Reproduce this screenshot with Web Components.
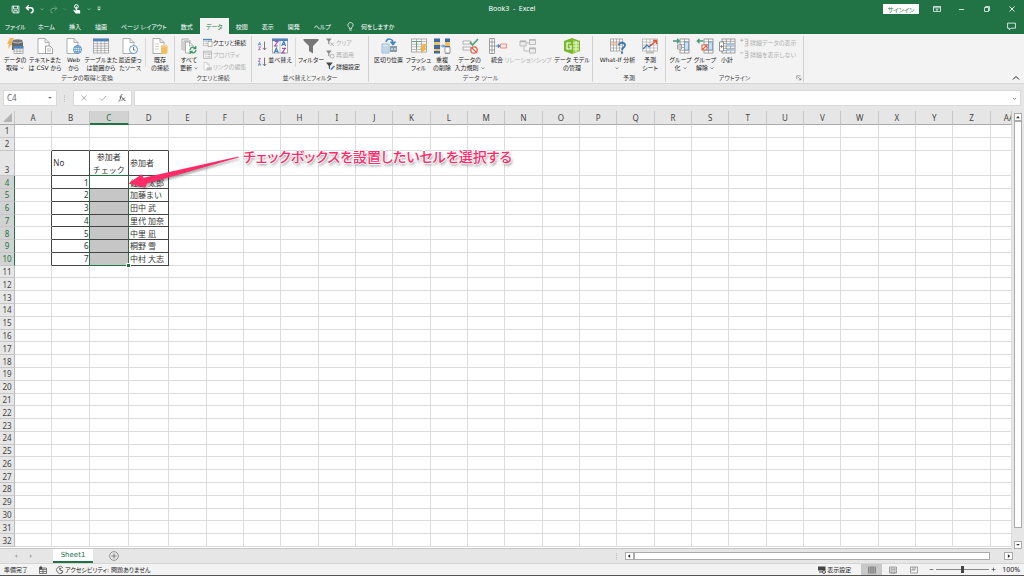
<!DOCTYPE html>
<html lang="ja">
<head>
<meta charset="utf-8">
<meta name="viewport" content="width=device-width, initial-scale=1">
<title>Book3 - Excel</title>
<style>
html,body{margin:0;height:100%}
body{font-family:"DejaVu Sans","Noto Sans CJK JP",sans-serif;font-size:6px;color:#333;font-feature-settings:"palt";overflow:hidden}
</style>
</head>
<body>
<excel-app></excel-app>
<script>
const table=(x,y,w,h,c,r,head='#4a86c5',line='#999')=>{
  let s=`<rect x="${x}" y="${y}" width="${w}" height="${h}" fill="#fff" stroke="${line}" stroke-width=".8"/>`;
  for(let i=1;i<c;i++)s+=`<path d="M${x+w*i/c} ${y}v${h}" stroke="${line}" stroke-width=".7"/>`;
  for(let i=1;i<r;i++)s+=`<path d="M${x} ${y+h*i/r}h${w}" stroke="${line}" stroke-width=".7"/>`;
  if(head)s+=`<path d="M${x-.4} ${y-.4}h${w+.8}v2.4h-${w+.8}z" fill="${head}"/>`;
  return s;
};
const page=(x=1,y=.5,w=11,h=15)=>`<path d="M${x} ${y}h${w-4}l4 4v${h-4}h-${w}z" fill="#fff" stroke="#999" stroke-width=".8"/><path d="M${x+w-4} ${y}v4h4" fill="none" stroke="#999" stroke-width=".8"/>`;
const sort=(x,a,b,ca,cb)=>{
  const g={A:'M0 5L2 0l2 5M.8 3.4h2.4',Z:'M.3.3h3.4L.3 5h3.4'};
  return `<g fill="none" stroke-width="1.2"><path transform="translate(${x} 2)" d="${g[a]}" stroke="${ca}"/><path transform="translate(${x} 9)" d="${g[b]}" stroke="${cb}"/></g>`;
};
const sortArrow='<path d="M12 1v13M9 11l3 3 3-3" fill="none" stroke="#666" stroke-width="1.4"/>';
const funnel='<path d="M0 1h10L6 6v6L4 10V6z" fill="#888"/>';
const ICONS={
  save:'<path d="M2 2h12v12H4l-2-2z" fill="none" stroke="#fff" stroke-width="1.5"/><path d="M4.5 2v5h7V2M5 14v-4h6v4" fill="none" stroke="#fff" stroke-width="1.5"/>',
  undo:'<path d="M6 2L2 6l4 4M2 6h7a4 4 0 0 1 0 8" fill="none" stroke="currentColor" stroke-width="2.2"/>',
  redo:'<path d="M10 2l4 4-4 4M14 6H7a4 4 0 0 0 0 8" fill="none" stroke="currentColor" stroke-width="1.6"/>',
  touch:'<circle cx="7" cy="4" r="3" fill="none" stroke="#fff" stroke-width="1.6"/><path d="M6 4h2v5l5 1v5H6L2 10l1-1 3 2z" fill="#fff"/>',
  caret:'<path d="M3 5l5 5 5-5z" fill="currentColor"/>',
  chev:'<path d="M3 6l5 5 5-5" fill="none" stroke="currentColor" stroke-width="2.4"/>',
  chevup:'<path d="M2 11l6-6 6 6" fill="none" stroke="currentColor" stroke-width="2"/>',
  custom:'<path d="M4 3h8" stroke="currentColor" stroke-width="2"/><path d="M3 7l5 5 5-5z" fill="currentColor"/>',
  left:'<path d="M11 3L5 8l6 5z" fill="currentColor"/>',
  right:'<path d="M5 3l6 5-6 5z" fill="currentColor"/>',
  up:'<path d="M3 11l5-6 5 6z" fill="currentColor"/>',
  ribbonopt:'<path d="M1 3h14v10H1zM1 5.5h14M8 12V8M6 9.500l2-2 2 2" fill="none" stroke="currentColor" stroke-width="1.5"/>',
  min:'<path d="M2 8h12" stroke="currentColor" stroke-width="1.8"/>',
  restore:'<path d="M3 5h8v8H3zM5 5V3h8v8h-2" fill="none" stroke="currentColor" stroke-width="1.5"/>',
  close:'<path d="M3 3l10 10M13 3L3 13" stroke="currentColor" stroke-width="1.8"/>',
  comment:'<path d="M1 2h14v9H7l-3 3v-3H1z" fill="none" stroke="currentColor" stroke-width="1.4"/>',
  bulb:'<path d="M6 12v-2C1 6 4 1 8 1s7 5 2 9v2zM6 14.500h4" fill="none" stroke="currentColor" stroke-width="1.4"/>',
  getdata:'<path d="M3 0h4L5 4h2L1 11l1-5H0z" fill="#f0b555"/><path d="M5 3v9h11V3z" fill="#666"/><ellipse cx="10.500" cy="3" rx="5.500" ry="2" fill="#777" stroke="#f3f3f3" stroke-width=".6"/>'+table(7,8.500,9,7,3,3),
  text:page()+'<path d="M8.500 8h4.500l2.500 2.500V15.500h-7z" fill="#fff" stroke="#888" stroke-width=".8"/><path d="M10 11h4M10 13h4" stroke="#999" stroke-width=".7"/>',
  web:page()+'<circle cx="11.500" cy="11.500" r="4" fill="#fff" stroke="#4a8bc9"/><path d="M7.500 11.500h8M11.500 7.500v8M8.500 9.500h6M8.500 13.500h6" stroke="#4a8bc9" stroke-width=".6"/><ellipse cx="11.500" cy="11.500" rx="2" ry="4" fill="none" stroke="#4a8bc9" stroke-width=".7"/>',
  range:table(.5,1,15,14,4,6),
  recent:page()+'<circle cx="11.500" cy="11.500" r="4" fill="#fff" stroke="#4a8bc9" stroke-width=".9"/><path d="M11.500 9v3h2" fill="none" stroke="#555" stroke-width=".8"/>',
  existing:page()+'<path d="M3 6h4M3 8.500h4M3 11h4" stroke="#bbb" stroke-width=".7"/><path d="M9 8v6.500c0 2 6.500 2 6.500 0V8z" fill="#f2c063"/><ellipse cx="12.200" cy="8" rx="3.300" ry="1.300" fill="#f6d08a"/>',
  refresh:'<path d="M1 12V1h7M3 13V3h7" fill="none" stroke="#999" stroke-width=".8"/>'+page(4.500,4,8,11)+'<circle cx="12" cy="12" r="4" fill="#f3f3f3"/><path d="M9 12a3 3 0 0 1 5-2M15 12a3 3 0 0 1-5 2M14.800 8v2.500h-2.500M9.200 16v-2.500h2.500" fill="none" stroke="#3b9b6c" stroke-width="1.300"/>',
  queries:table(.5,2,15,12,3,3)+'<path d="M9 6h7v9H9z" fill="#fff" stroke="#777"/>',
  props:'<path d="M1 2h14v13H1zM1 5h14" fill="#f3f3f3" stroke="#aaa" stroke-width="1.300"/><path d="M4 8h2M8 8h5M4 12h2M8 12h5" stroke="#aaa" stroke-width="1.400"/>',
  links:page(2,1,9,13).replaceAll('#999','#aaa')+'<path d="M7 12h3M11 12h4M7 10h3v4H7zM12 10h3v4h-3z" stroke="#aaa" fill="none"/>',
  az:'<g transform="translate(2 0)">'+sort(0,'A','Z','#4580be','#a04caf')+'</g>'+sortArrow,
  za:'<g transform="translate(2 0)">'+sort(0,'Z','A','#a04caf','#4580be')+'</g>'+sortArrow,
  sort:table(.5,1,15,14,2,1)+'<g transform="translate(0 1)">'+sort(2.300,'Z','A','#a04caf','#4580be')+sort(9.700,'A','Z','#4580be','#a04caf')+'</g>',
  filter:'<path d="M.5 1h15v1.500L10 8v7.500L6 13V8L.5 2.500z" fill="#777"/>',
  clear:funnel+'<path d="M8 8l6 6M14 8l-6 6" stroke="#aaa" stroke-width="1.600"/>',
  reapply:funnel+'<circle cx="11" cy="11" r="3.500" fill="#f3f3f3" stroke="#aaa" stroke-width="1.500"/>',
  advanced:'<path d="M0 1h12L7 7v6L5 11V7z" fill="#444"/><path d="M8 15l1-4 5-5 2 2-5 5z" fill="#3d80bd"/>',
  split:'<path d="M1 6h7v9H1z" fill="#e6f0f9" stroke="#7aa3ca" stroke-width=".8"/><path d="M2 9h5M2 11h5M2 13h5" stroke="#7aa3ca" stroke-width=".7"/><path d="M9 8h7v6H9z" fill="#8a9aaa"/><path d="M10 11h2M13 11h2" stroke="#fff"/><path d="M5 4c1-4 7-4 7 1M9.500 3.500l2.500 3 2.500-3" fill="none" stroke="#3c83c5" stroke-width="1.500"/>',
  flash:table(.5,1,15,13,3,5,null)+'<path d="M1 3.500h9M5.500 3v8" stroke="#5ba584"/><path d="M12 6h4l-2 4h2l-6 6 1-5H9z" fill="#f2b650"/>',
  dup:'<g><path d="M0 .5h6v15H0zM11 .5h5v15h-5z" fill="#3f6b9b"/><path d="M0 4h6v3H0zM0 11h6v2H0zM11 4h5v4h-5z" fill="#f0bf69"/><path d="M11 9h5v6h-5z" fill="#fff" stroke="#777" stroke-width=".7"/><path d="M6.500 8h4M9 6.500L10.500 8 9 9.500" fill="none" stroke="#3c83c5"/></g>',
  valid:'<path d="M1 3h8v3H1zM1 9h8v3H1z" fill="#fff" stroke="#999" stroke-width=".8"/><path d="M8 4l2.500 3L16 1" fill="none" stroke="#4aa27c" stroke-width="1.600"/><circle cx="12" cy="12" r="3.200" fill="#fff" stroke="#e0604a" stroke-width="1.300"/><path d="M10 10l4 4" stroke="#e0604a" stroke-width="1.300"/>',
  consol:'<path d="M.5.5h5v15h-5zM.5 4h5M.5 8h5M.5 12h5M3 .5v15" fill="#fff" stroke="#888" stroke-width=".8"/><path d="M6.500 8h4M9 6.300L10.700 8 9 9.700" fill="none" stroke="#3c83c5" stroke-width="1.200"/><path d="M11.500 6h6v4h-6z" fill="#fbe9e4" stroke="#e38772" stroke-width=".9"/>',
  relation:'<g fill="#eee" stroke="#b5b5b5" stroke-width=".9"><path d="M0 3h6v5H0zM9.500 1.500h6v5h-6zM9.500 10h6v5h-6z"/><path d="M6 5h3.500M4 8v5h5.500" fill="none"/><path d="M0 3.500h6M9.500 2h6M9.500 10.500h6" stroke-width="1.500"/></g>',
  model:'<path d="M0 3L8 0l8 3v10l-8 3-8-3z" fill="#77b82a"/><path d="M9 2l6 2v9l-6 2z" fill="#a5d55d"/><path d="M9 8h6M12 3v11M9 5h6M9 11h6" stroke="#fff" stroke-width=".7"/><path d="M7 5H3v6h4V8H5" fill="none" stroke="#fff" stroke-width="1.200"/>',
  whatif:table(.5,1,12,12,4,4,null,'#9a9a9a')+'<path d="M1 4h9v3H1z" fill="#f4b084" opacity=".6"/><path d="M9 7.500c0-4 6.500-3.500 6 0-.2 2-3 2-3 4.500M12 13.500v2.200" fill="none" stroke="#3b79ba" stroke-width="1.900"/>',
  forecast:table(.5,1,15,12,4,4,null,'#aaa')+'<path d="M1 11l4-4 2 2 3-3" fill="none" stroke="#3b79ba" stroke-width="1.200"/><path d="M8 8l6-5M11 2.500h3.500V6" fill="none" stroke="#e2543b" stroke-width="1.400"/><path d="M4 13.500h8v2H4z" fill="#bbb"/>',
  group:table(7,1,9,14,2,5,null,'#888')+'<path d="M11.500 4h4v8h-4z" fill="#c9dff2" stroke="#5c8fc0" stroke-width=".7"/><path d="M0 3h6M4 .8L6.200 3 4 5.200" fill="none" stroke="#3f9b73" stroke-width="1.300"/><path d="M4.500 7h4v4h-4zM5 9h3" fill="#fff" stroke="#777" stroke-width=".7"/>',
  ungroup:table(7,1,9,14,2,5,null,'#888')+'<path d="M11.500 4h4v8h-4z" fill="#c9dff2" stroke="#5c8fc0" stroke-width=".7"/><path d="M6.500 3H.5M2.500.8L.3 3l2.200 2.200" fill="none" stroke="#3f9b73" stroke-width="1.300"/><path d="M5 7h5v5H5zM5 12l5-5" fill="#fff" stroke="#e0604a" stroke-width="1.100"/>',
  subtotal:table(3,1,13,14,3,6,null,'#888')+'<path d="M7.500 5.500h8v2.500h-8zM7.500 11h8v2h-8z" fill="#a9c8e4"/><path d="M.5 4h4v9h-4zM1 8.500h3M2.500 7v3" fill="#fff" stroke="#777" stroke-width=".8"/>',
  showd:'<path d="M0 4h6M3 1v6M8 2h6M14 2v12H8M9 6h5M9 10h5" fill="none" stroke="#aaa" stroke-width="1.300"/>',
  hided:'<path d="M0 5h6M8 2h6M14 2v12H8M9 6h5M9 10h5" fill="none" stroke="#aaa" stroke-width="1.300"/>',
  launch:'<path d="M2 11V2h10M5 5l8 8M13 7v6H7" fill="none" stroke="#666" stroke-width="1.500"/>',
  check:'<path d="M2 9l4 4 8-9" fill="none" stroke="currentColor" stroke-width="1.800"/>',
  fx:'<path d="M9 1C6 0 6 4 5 8s-1 7-4 6M3 6h5M8 8c4-1 2 6 7 5M14 7l-7 7" fill="none" stroke="currentColor" stroke-width="1.600"/>',
  addsheet:'<circle cx="8" cy="8" r="7" fill="none" stroke="#777" stroke-width="1.200"/><path d="M8 4v8M4 8h8" stroke="#777" stroke-width="1.500"/>',
  macro:'<path d="M1 4h14v11H1zM1 7h14M1 11h14M8 5v10" fill="none" stroke="#555" stroke-width="1.500"/><circle cx="3.500" cy="3.500" r="3" fill="#444"/>',
  access:'<path d="M14 4A7 7 0 1 0 13 13M10 5L7 8l7 2-3 5" fill="none" stroke="#444" stroke-width="1.500"/><circle cx="8" cy="5" r="1.500" fill="#444"/>',
  display:'<path d="M0 1h15v8H0zM2 11h6v2H2z" fill="#444"/><circle cx="12" cy="12" r="3" fill="#f3f3f3" stroke="#444" stroke-width="1.800"/>',
  normal:'<path d="M1 2h14v12H1zM1 6h14M1 10h14M5.700 2v12M10.300 2v12" fill="none" stroke="#666" stroke-width="1.300"/>',
  layout:'<path d="M1 2h14v12H1z" fill="none" stroke="#777" stroke-width="1.300"/><path d="M4 4h8v10H4zM5 7h6M5 10h6" fill="none" stroke="#777" stroke-width="1.200"/>',
  breaks:'<path d="M1 2h14v12H1zM6 2v6h4V2M1 8h5" fill="none" stroke="#777" stroke-width="1.300"/>',
  plus:'<path d="M2 8h12M8 2v12" stroke="currentColor" stroke-width="1.800"/>',
  dots:'<path d="M7 1h2v2H7zM7 5h2v2H7zM7 9h2v2H7zM7 13h2v2H7z" fill="#aaa"/>'
};
const RESET=`*{box-sizing:border-box}button{font:inherit;font-feature-settings:inherit;color:inherit;background:none;border:0;padding:0;margin:0;display:flex;align-items:center;justify-content:center}input{font:inherit;color:inherit;margin:0;padding:0;border:0;border-radius:0;outline:0;min-width:0}`;
const define=(name,css,html,after)=>customElements.define(name,class extends HTMLElement{
  constructor(){super();this.attachShadow({mode:'open'});}
  connectedCallback(){
    this.shadowRoot.innerHTML=`<style>${RESET}${css}</style>${typeof html==='function'?html(this):html}`;
    if(after)after(this.shadowRoot,this);
  }
});
const icon=(n,s=8)=>`<xl-icon name="${n}" size="${s}"></xl-icon>`;

define('xl-icon',`:host{display:block;flex:none}svg{display:block;overflow:visible}`,
  el=>{const s=el.getAttribute('size');return `<svg width="${s}" height="${s}" viewBox="0 0 16 16" aria-hidden="true">${ICONS[el.getAttribute('name')]}</svg>`;});

define('xl-titlebar',`
:host{display:grid;grid-template-columns:1fr auto 1fr;align-items:center;height:18px;background:#217346;color:#fff;flex:none}
.quick{display:flex;align-items:center;padding-left:11px;gap:5px}
.quick button{height:16px}
.c{opacity:.7}.dim{opacity:.35}
h1{margin:0;font:7px/16px "Noto Sans",sans-serif;white-space:pre}
.win{display:flex;justify-content:flex-end;align-items:center}
.win button{width:25px;height:16px}
.win .sign{width:36px;height:10px;background:#fff;color:#217346;margin-right:5px}
`,`<div class="quick"><button aria-label="上書き保存">${icon('save',9)}</button>
<button aria-label="元に戻す">${icon('undo',10)}</button><button class="c" aria-label="元に戻す一覧">${icon('chev',4)}</button>
<button class="dim" aria-label="やり直し">${icon('redo',9)}</button><button class="c dim" aria-label="やり直し一覧">${icon('chev',4)}</button>
<button aria-label="タッチ/マウス モードの切り替え">${icon('touch',10)}</button><button class="c" aria-label="モード一覧">${icon('chev',4)}</button>
<button aria-label="カスタマイズ">${icon('custom',6)}</button></div>
<h1>Book3  -  Excel</h1>
<div class="win"><button class="sign">サインイン</button><button aria-label="リボンの表示オプション">${icon('ribbonopt',8)}</button><button aria-label="最小化">${icon('min',7)}</button><button aria-label="元に戻す(縮小)">${icon('restore',8)}</button><button aria-label="閉じる">${icon('close',8)}</button></div>`);

define('xl-tabs',`
:host{display:flex;align-items:stretch;height:16px;background:#217346;color:#fff;flex:none}
nav{display:flex;flex:1}
button{padding:0 7px;white-space:nowrap}
button:first-child{padding:0 5px}
button[aria-selected=true]{background:#f3f3f3;color:#217346;padding:0 6px}
.tell{gap:6px;padding-left:8px}
.note{padding:0 8px}
`,`<nav role="tablist">${['ファイル','ホーム','挿入','描画','ページ レイアウト','数式','データ','校閲','表示','開発','ヘルプ'].map(t=>`<button role="tab" aria-selected="${t==='データ'}">${t}</button>`).join('')}<button class="tell">${icon('bulb',9)}<span>何をしますか</span></button></nav><button class="note" aria-label="コメント">${icon('comment',9)}</button>`);

define('xl-group',`
:host{display:flex;flex-direction:column;border-right:1px solid #d0d0d0;height:46px;margin-top:2px;flex:none;position:relative}
.items{display:flex;height:39px}
.label{text-align:center;line-height:8px;white-space:nowrap;color:#444}
.launch{position:absolute;right:1px;bottom:1px}
`,el=>`<div class="items"><slot></slot></div><div class="label">${el.getAttribute('label')}</div>${el.hasAttribute('launcher')?`<button class="launch" aria-label="アウトラインの設定">${icon('launch',6)}</button>`:''}`);

define('xl-command',`
:host{display:flex;justify-content:center;flex:none}
button{flex-direction:column;justify-content:flex-start;gap:2px;padding-top:2px;width:100%}
.t{white-space:nowrap;line-height:8px;height:16px;text-align:center}
.t span{display:flex;justify-content:center;align-items:center;gap:2px;height:8px}
:host([disabled]) .t{color:#b0b0b0}
`,el=>{
  const lines=el.getAttribute('label').split('|'),drop=el.hasAttribute('drop');
  return `<button ${el.hasAttribute('disabled')?'disabled':''}>${icon(el.getAttribute('icon'),16)}<span class="t">${lines.map((l,i)=>`<span>${l}${drop&&i===lines.length-1?icon('chev',4):''}</span>`).join('')}</span></button>`;
});

define('xl-stack',`
:host{display:flex;flex-direction:column;flex:none}
button{justify-content:flex-start;gap:1px;height:12px;white-space:nowrap}
button:disabled{color:#b0b0b0}
:host([wide]) button{height:16px}
`,el=>el.getAttribute('items').split('|').map(i=>{const [n,t,d]=i.split(',');return `<button ${d?'disabled':''} ${t?'':`aria-label="${n==='az'?'昇順':'降順'}"`}>${icon(n,t?9:10)}${t?`<span>${t}</span>`:''}</button>`;}).join(''));

const cmd=(w,ic,label,extra='')=>`<xl-command style="width:${w}px" icon="${ic}" label="${label}" ${extra}></xl-command>`;
define('xl-ribbon',`
:host{display:flex;height:50px;background:#f3f3f3;border-bottom:1px solid #d5d5d5;flex:none;color:#222}
.rule{width:1px;height:29px;margin-top:2px;background:#d8d8d8;margin-right:1px}
.space{width:6px}
.fold{margin-left:auto;align-self:flex-end;padding:1px 4px}
`,`
<xl-group style="width:175px" label="データの取得と変換">${cmd(30,'getdata','データの|取得','drop')}${cmd(30,'text','テキストまた|は CSV から')}${cmd(27,'web','Web|から')}${cmd(28,'range','テーブルまた|は範囲から')}${cmd(30,'recent','最近使っ|たソース')}<div class="rule"></div>${cmd(26,'existing','既存|の接続')}</xl-group>
<xl-group style="width:77px" label="クエリと接続">${cmd(28,'refresh','すべて|更新','drop')}<xl-stack items="queries,クエリと接続|props,プロパティ,1|links,リンクの編集,1"></xl-stack></xl-group>
<xl-group style="width:117px" label="並べ替えとフィルター"><xl-stack wide style="width:16px;padding-left:5px;padding-top:2px" items="az|za"></xl-stack>${cmd(24,'sort','並べ替え')}<div class="rule" style="margin-left:3px"></div>${cmd(28,'filter','フィルター')}<xl-stack style="padding-left:1px" items="clear,クリア,1|reapply,再適用,1|advanced,詳細設定"></xl-stack></xl-group>
<xl-group style="width:224px" label="データ ツール">${cmd(39,'split','区切り位置')}${cmd(21,'flash','フラッシュ|フィル')}${cmd(26,'dup','重複|の削除')}${cmd(29,'valid','データの|入力規則','drop')}${cmd(26,'consol','統合')}${cmd(36,'relation','リレーションシップ','disabled')}<div class="space"></div>${cmd(40,'model','データ モデル|の管理')}</xl-group>
<xl-group style="width:73px" label="予測">${cmd(49,'whatif','What-If 分析|','drop')}${cmd(16,'forecast','予測|シート')}</xl-group>
<xl-group style="width:138px" label="アウトライン" launcher>${cmd(29,'group','グループ|化','drop')}${cmd(20,'ungroup','グループ|解除','drop')}${cmd(24,'subtotal','小計')}<xl-stack style="padding-left:1px" items="showd,詳細データの表示,1|hided,詳細を表示しない,1"></xl-stack></xl-group>
<button class="fold" aria-label="リボンを折りたたむ">${icon('chevup',8)}</button>`);

define('xl-formula',`
:host{display:flex;align-items:stretch;height:27px;padding:6px 3px 5px;background:#e6e6e6;flex:none;color:#666}
.box{display:flex;align-items:center;background:#fff;border:1px solid #d8d8d8}
.name{width:54px}
.name input{flex:1;padding-left:3px;font:8px/14px "Noto Sans",sans-serif;width:20px;background:none}
.name button{width:12px}
.dots{align-self:center;margin:0 5px 0 4px}
.ops{width:59px;justify-content:space-around;color:#aaa}
.ops .fx{color:#444}
.bar{flex:1;margin-left:2px}
.bar input{flex:1;background:none;height:14px}
.bar button{width:11px}
`,`<div class="box name"><input aria-label="名前ボックス" value="C4"><button aria-label="名前一覧">${icon('caret',6)}</button></div><div class="dots">${icon('dots',7)}</div>
<div class="box ops"><button aria-label="キャンセル">${icon('close',8)}</button><button aria-label="入力">${icon('check',8)}</button><button class="fx" aria-label="関数の挿入">${icon('fx',8)}</button></div>
<div class="box bar"><input aria-label="数式バー"><button aria-label="数式バーの展開">${icon('chev',5)}</button></div>`);

const COLS=[...'ABCDEFGHIJKLMNOPQRSTUVWXYZ','AA'];
const NAMES=['佐藤 太郎','加藤まい','田中 武','里代 加奈','中里 凪','桐野 雪','中村 大志'];
define('xl-sheet',`
:host{display:flex;flex:1;min-height:0;position:relative;background:#e6e6e6;font-family:"Noto Sans","Noto Sans CJK JP",sans-serif;font-size:8px;font-feature-settings:normal;color:#444}
.pane{flex:1;min-width:0;display:flex;flex-direction:column;background:#fff;border-bottom:1px solid #c6c6c6;padding-bottom:1px}
table{flex:1;min-height:0;display:grid;grid-template-columns:15px 37fr 37fr 39fr 40fr repeat(22,37fr) 21fr;grid-template-rows:14px 1fr 1fr 2fr repeat(29,1fr)}
thead,tbody,tr{display:contents}
th,td{min-width:0;min-height:0;padding:0;border:solid #dcdcdc;border-width:0 1px 1px 0;line-height:11px;white-space:nowrap;font-weight:400;overflow:hidden;display:flex;align-items:center}
th{background:#e6e6e6;justify-content:center;border-color:#c6c6c6}
thead th{border-bottom-color:#aaa}
thead th:last-child{justify-content:flex-start;padding-left:13px}
thead th.on{background:#d2d2d2;color:#217346;border-bottom:2px solid #217346}
tbody th{border-right-color:#bbb}
tbody th.on{background:#d2d2d2;color:#217346;border-right:1px solid #217346}
tbody th.tall{align-items:flex-end}
th.corner{justify-content:flex-end;align-items:flex-end;padding:2px}
.k{border-color:#444;color:#333}
.kr{border-right-color:#444}.kb{border-bottom-color:#444}
.n{justify-content:flex-end}
.h{padding-left:1px}
.mid{justify-content:center;text-align:center;line-height:13px}
.sel{background:#c6c6c6}
.act{background:#fff}
.gr{border-right-color:#217346}.gb{border-bottom-color:#217346}
.last{overflow:visible;position:relative}
.last::after{content:"";position:absolute;right:-2px;bottom:-2px;width:3px;height:3px;background:#217346;outline:1px solid #fff}
.vscroll{width:12px;display:flex;flex-direction:column;align-items:center;padding-top:2px}
.vscroll button,.thumb{width:8px;height:8px;background:#fff;border:1px solid #aaa;color:#333}
.thumb{flex:1;margin-bottom:13px}
.note{position:absolute;left:243px;top:34px;margin:0;font:500 14px/22px "Noto Sans CJK JP",sans-serif;font-feature-settings:"palt";color:#ff2a68;white-space:nowrap;text-shadow:1px 0 #fff,-1px 0 #fff,0 1px #fff,0 -1px #fff,1px 2px 3px #777}
.arrow{position:absolute;left:126px;top:42px;filter:drop-shadow(1px 2px 1px #0005)}
`,()=>{
  let rows='';
  for(let r=1;r<=32;r++){
    let c='';
    COLS.forEach((l,i)=>{
      let k='',v='';
      if(r===2&&i>0&&i<4)k='kb';
      if(r>2&&r<11&&i===0)k='kr';
      if(r>2&&r<11&&i>0&&i<4){
        k='k';
        if(r===3){v=['No','参加者<br>チェック','参加者'][i-1];k+=i===2?' mid gb':' h';}
        else{
          if(i===1){v=r-3;k+=' n gr';}
          if(i===2)k+=' sel gr'+(r===4?' act':'')+(r===10?' gb last':'');
          if(i===3){v=NAMES[r-4];k+=' h';}
        }
      }
      c+=`<td class="${k}">${v?`<span>${v}</span>`:''}</td>`;
    });
    rows+=`<tr><th scope="row" class="${r>3&&r<11?'on':''}${r===3?'tall':''}">${r}</th>${c}</tr>`;
  }
  return `<div class="pane"><table><thead><tr><th class="corner"><svg width="9" height="9" viewBox="0 0 9 9" aria-hidden="true"><path d="M9 0v9H0z" fill="#b2b2b2"/></svg></th>${COLS.map(c=>`<th scope="col" class="${c==='C'?'on':''}">${c}</th>`).join('')}</tr></thead><tbody>${rows}</tbody></table></div>
<div class="vscroll"><button aria-label="上へ">${icon('up',6)}</button><div class="thumb"></div><button aria-label="下へ">${icon('caret',6)}</button></div>
<svg class="arrow" width="116" height="38" viewBox="126 153 116 38" aria-hidden="true"><path d="M128.500 183.500L141.500 174.300l2 3.500L238.500 156.500v1L147 183.500l-2 4z" fill="#ff2a68"/></svg>
<p class="note">チェックボックスを設置したいセルを選択する</p>`;
});

define('xl-sheetbar',`
:host{display:flex;align-items:stretch;height:14px;background:#e6e6e6;flex:none;color:#aaa}
.tabs{flex:1;display:flex;align-items:center}
.nav{width:53px;display:flex;justify-content:center;gap:9px;padding-right:7px}
.tab{width:40px;height:14px;background:#fff;border-bottom:2px solid #217346;color:#217346;font:7px/12px "DejaVu Sans",sans-serif}
.add{margin-left:16px}
.tabs .dots{margin-left:auto;margin-right:5px}
.scroll{width:39%;display:flex;align-items:center;padding-right:11px}
.scroll button,.thumb{height:8px;background:#fff;border:1px solid #aaa;color:#222}
.scroll button{width:9px}
.thumb{flex:1;margin-right:14px}
`,`<div class="tabs"><div class="nav"><button aria-label="前のシート">${icon('left',6)}</button><button aria-label="次のシート">${icon('right',6)}</button></div><button class="tab">Sheet1</button><button class="add" aria-label="新しいシート">${icon('addsheet',10)}</button><div class="dots">${icon('dots',7)}</div></div>
<div class="scroll"><button aria-label="左へ">${icon('left',6)}</button><div class="thumb"></div><button aria-label="右へ">${icon('right',6)}</button></div>`);

define('xl-status',`
:host{display:flex;align-items:center;height:13px;background:#f3f3f3;border-top:1px solid #d5d5d5;border-bottom:1px solid #555;flex:none;padding:0 4px;white-space:nowrap;color:#222}
.sp{flex:1}
button{gap:1px;height:11px}
.m{margin-left:11px}
.m+.m{margin-left:9px}
.v{width:21px}
.v.on{background:#c8c8c8}
input{appearance:none;width:53px;height:11px;background:linear-gradient(#888,#888) center/100% 1px no-repeat;margin:0 2px}
input::-webkit-slider-thumb{appearance:none;width:3px;height:7px;background:#444}
.pc{margin-left:6px;font:7px/11px "Noto Sans",sans-serif}
`,`<span>準備完了</span><button class="m" aria-label="マクロの記録">${icon('macro',8)}</button><button class="m">${icon('access',8)}<span>アクセシビリティ: 問題ありません</span></button><span class="sp"></span>
<button style="margin-right:10px">${icon('display',8)}<span>表示設定</span></button><button class="v on" aria-label="標準">${icon('normal',8)}</button><button class="v" aria-label="ページ レイアウト">${icon('layout',8)}</button><button class="v" aria-label="改ページ プレビュー">${icon('breaks',8)}</button>
<button style="margin-left:5px" aria-label="縮小">${icon('min',5)}</button><input type="range" min="0" max="200" value="100" aria-label="ズーム"><button aria-label="拡大">${icon('plus',5)}</button><button class="pc">100%</button>`);

define('excel-app',`:host{display:flex;flex-direction:column;height:100vh}`,
`<xl-titlebar></xl-titlebar><xl-tabs></xl-tabs><xl-ribbon></xl-ribbon><xl-formula></xl-formula><xl-sheet></xl-sheet><xl-sheetbar></xl-sheetbar><xl-status></xl-status>`);
</script>
</body>
</html>
